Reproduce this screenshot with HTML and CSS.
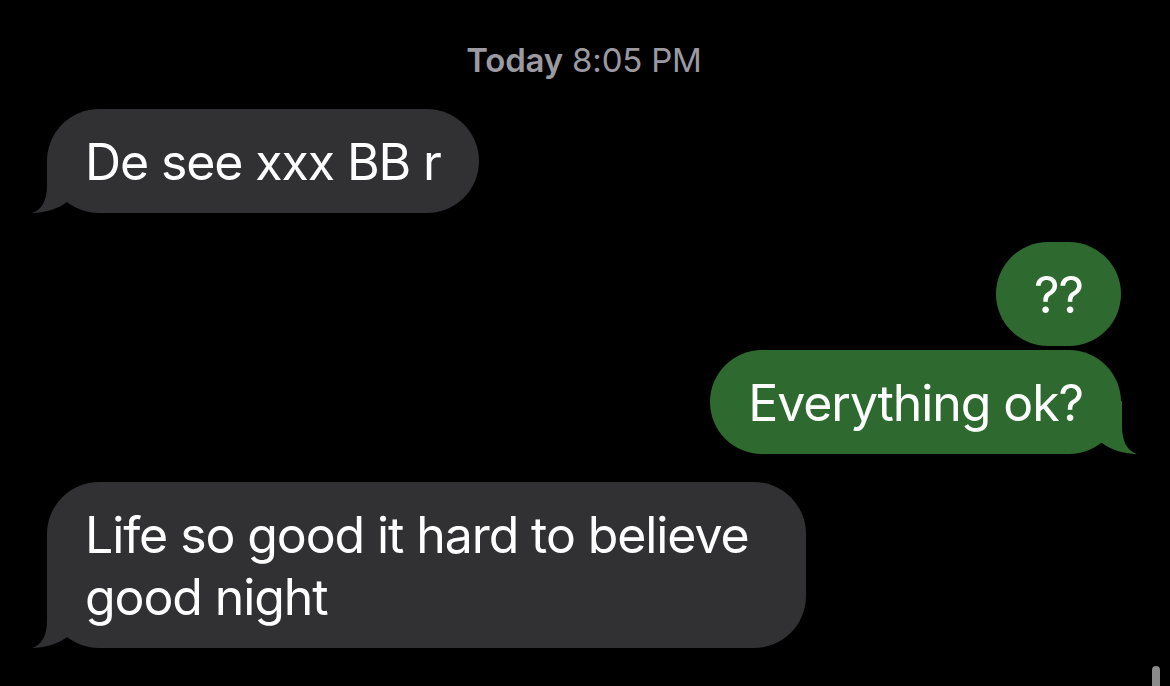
FILE: index.html
```html
<!DOCTYPE html>
<html lang="en">
<head>
<meta charset="utf-8">
<title>Messages</title>
<link rel="stylesheet" href="styles.css">
</head>
<body>
<main class="thread">
  <div class="stamp"><span class="day">Today</span> 8:05 PM</div>

  <div class="msg in first"><span class="text">De see xxx BB r</span><svg class="tail" viewBox="0 0 70 55" aria-hidden="true"><path d="M15,2 L15,27 C15,42 10,52 0,55 C12,55 26,51 35,44 L67,44 L67,2 Z"/></svg></div>

  <div class="msg out gap"><span class="text">??</span></div>
  <div class="msg out tight"><span class="text">Everything ok?</span><svg class="tail" viewBox="0 0 70 55" aria-hidden="true"><path d="M15,2 L15,27 C15,42 10,52 0,55 C12,55 26,51 35,44 L67,44 L67,2 Z"/></svg></div>

  <div class="msg in gap-sm"><span class="text">Life so good it hard to believe good night</span><svg class="tail" viewBox="0 0 70 55" aria-hidden="true"><path d="M15,2 L15,27 C15,42 10,52 0,55 C12,55 26,51 35,44 L67,44 L67,2 Z"/></svg></div>
</main>
<div class="scroll-ind"></div>
</body>
</html>
```

FILE: styles.css
```css
html, body {
  margin: 0;
  height: 100%;
  background: #000;
  overflow: hidden;
}

body {
  font-family: Inter, "Noto Sans", "Liberation Sans", sans-serif;
  color: #fff;
}

.thread {
  display: flex;
  flex-direction: column;
  padding: 40px 49px 0 47px;
}

.stamp {
  align-self: center;
  height: 40px;
  line-height: 40px;
  font-size: 33px;
  letter-spacing: -0.2px;
  color: #9a9aa0;
  margin-bottom: 29px;
}

.stamp .day {
  font-weight: 600;
}

.msg {
  position: relative;
  box-sizing: border-box;
  max-width: 759px;
  padding: 22px 38px 20px;
  border-radius: 52px;
  font-size: 50px;
  line-height: 62px;
  letter-spacing: -1.1px;
}

/* text sits above the tail shape */
.msg .text {
  position: relative;
  z-index: 1;
}

.msg.in {
  align-self: flex-start;
  background: #313133;
}

.msg.out {
  align-self: flex-end;
  background: #2e6a30;
}

.msg.gap { margin-top: 29px; }
.msg.tight { margin-top: 4px; }
.msg.gap-sm { margin-top: 28px; }

.tail {
  position: absolute;
  bottom: 0;
  width: 70px;
  height: 55px;
  z-index: 0;
}

.in .tail {
  left: -15px;
}

.in .tail path { fill: #313133; }

.out .tail {
  right: -16px;
  transform: scaleX(-1);
}

.out .tail path { fill: #2e6a30; }

.scroll-ind {
  position: absolute;
  left: 1152px;
  top: 666px;
  width: 8px;
  height: 40px;
  border-radius: 4px;
  background: #8b8b8b;
}
```
